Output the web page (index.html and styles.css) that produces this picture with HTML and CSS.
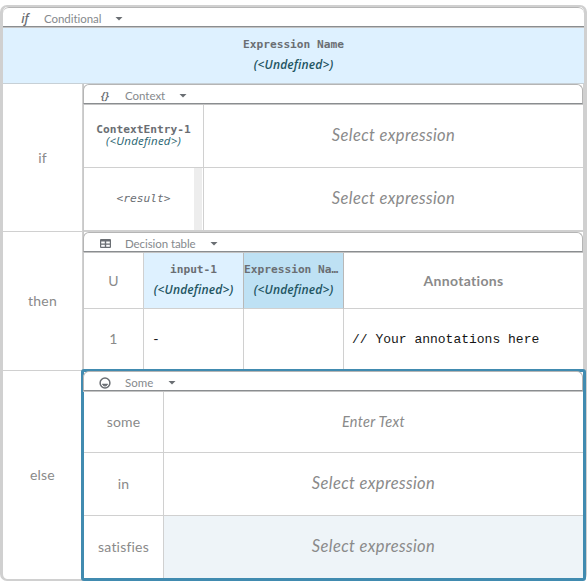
FILE: index.html
```html
<!DOCTYPE html>
<html lang="en">
<head>
<meta charset="utf-8">
<title>Boxed expression editor</title>
<link rel="stylesheet" href="styles.css">
</head>
<body>
<main class="editor">
  <header class="bar bar-root"><span class="icon"><i class="if-icon">if</i></span><span class="bar-name n-conditional">Conditional</span><span class="caret"></span></header>
  <div class="title"><b class="mono">Expression Name</b><i class="type">(&lt;Undefined&gt;)</i></div>
  <section class="branch branch-if">
    <div class="label l-if">if</div>
    <div class="nested">
      <header class="bar"><span class="icon"><i class="brace-icon">{}</i></span><span class="bar-name n-context">Context</span><span class="caret"></span></header>
      <div class="grid context">
        <div class="cell entry"><b class="mono">ContextEntry-1</b><i class="type type-light">(&lt;Undefined&gt;)</i></div>
        <div class="cell"><i class="select">Select expression</i></div>
        <div class="cell result"><i class="mono">&lt;result&gt;</i></div>
        <div class="cell"><i class="select">Select expression</i></div>
      </div>
    </div>
  </section>
  <section class="branch branch-then">
    <div class="label l-then">then</div>
    <div class="nested">
      <header class="bar"><span class="icon"><svg width="11" height="9" viewBox="0 0 11 9"><path fill="#6a6e73" fill-rule="evenodd" d="M1 0h9a1 1 0 0 1 1 1v7a1 1 0 0 1-1 1H1a1 1 0 0 1-1-1V1a1 1 0 0 1 1-1zM1.2 2.5h3.6v2H1.2zM6.2 2.5h3.6v2H6.2zM1.2 5.7h3.6v2H1.2zM6.2 5.7h3.6v2H6.2z"/></svg></span><span class="bar-name n-decision">Decision table</span><span class="caret"></span></header>
      <div class="grid decision">
        <div class="cell label-text">U</div>
        <div class="cell head input"><b class="mono">input-1</b><i class="type">(&lt;Undefined&gt;)</i></div>
        <div class="cell head output"><b class="mono">Expression Na…</b><i class="type">(&lt;Undefined&gt;)</i></div>
        <div class="cell"><b class="annotations">Annotations</b></div>
        <div class="cell label-text row-number">1</div>
        <div class="cell code">-</div>
        <div class="cell"></div>
        <div class="cell code">// Your annotations here</div>
      </div>
    </div>
  </section>
  <section class="branch branch-else">
    <div class="label l-else">else</div>
    <div class="nested selected">
      <header class="bar"><span class="icon"><svg width="12" height="12" viewBox="0 0 12 12" fill="none" stroke="#6a6e73"><circle cx="6" cy="6" r="4.9" stroke-width="1.5"/><path stroke-width="1.2" d="M3.2 7.4h5.6M4.2 8.3Q6 9.5 7.8 8.3"/></svg></span><span class="bar-name n-some">Some</span><span class="caret"></span></header>
      <div class="grid some">
        <div class="cell label-text">some</div>
        <div class="cell"><i class="enter">Enter Text</i></div>
        <div class="cell label-text">in</div>
        <div class="cell"><i class="select">Select expression</i></div>
        <div class="cell label-text">satisfies</div>
        <div class="cell hover"><i class="select">Select expression</i></div>
      </div>
    </div>
  </section>
</main>
</body>
</html>
```
FILE: styles.css
```css
* { box-sizing: border-box; }
body { margin: 0; padding-top: 5px; background: #fff; font-family: Lato, sans-serif; color: #8a8a8a; }
.editor { width: 587px; height: 576px; border: 3px solid #d0d0d0; border-top-width: 2px; border-bottom-width: 2px; border-radius: 7px; background: #fff; }
.bar { height: 21px; display: flex; align-items: center; padding: 3px 0 0 15px; background: #fff; border: 1px solid #b5b5b5; border-bottom: 1px solid #8a8d90; border-radius: 6px 6px 0 0; box-shadow: 0 1px #c4c4c4; position: relative; }
.bar-root { height: 20px; padding-left: 16px; border-left-width: 0; border-right-width: 0; }
.icon { width: 12px; display: flex; justify-content: center; flex: none; }
.if-icon { font: italic 600 12px/14px "Open Sans", sans-serif; color: #6a6e73; }
.brace-icon { font: italic 600 11px/14px "Noto Sans", sans-serif; color: #6a6e73; }
.bar-name { margin-left: 14px; padding-top: 1px; font: 11.5px/14px Lato, sans-serif; color: #85898d; white-space: nowrap; }
.bar-root .bar-name { margin-left: 13px; }
.n-conditional { width: 58px; letter-spacing: -.05px; }
.n-context { width: 41px; letter-spacing: -.02px; }
.n-decision { width: 72px; letter-spacing: -.08px; }
.n-some { width: 30px; letter-spacing: 0; }
.caret { margin-left: 13px; width: 8px; height: 4px; background: #6a6e73; clip-path: polygon(0 0, 100% 0, 50% 100%); }
.title { height: 57px; padding-bottom: 1px; background: #def1ff; border-bottom: 1px solid #c7d0d6; display: flex; flex-direction: column; align-items: center; justify-content: center; gap: 5px; }
.mono { font-family: "DejaVu Sans Mono", monospace; font-size: 11.2px; line-height: 15px; color: #6a6e73; }
.type { font: italic 600 12px/15px "Open Sans", sans-serif; color: #1f5562; letter-spacing: .14px; }
.branch { display: grid; grid-template-columns: 80px 1fr; }
.branch-if { height: 148px; }
.branch-then { height: 139px; }
.branch-else { height: 208px; }
.label { display: flex; align-items: center; justify-content: center; border-right: 1px solid #d0d0d0; border-bottom: 1px solid #d0d0d0; font-size: 14px; letter-spacing: .2px; padding-bottom: 1px; }
.branch-else .label { border-bottom: 0; }
.label.l-else { padding-bottom: 2px; }
.label.l-then { padding-bottom: 2px; }
.nested { min-width: 0; border-left: 1px solid #c8c8c8; border-right: 1px solid #d0d0d0; }
.nested .bar { margin-left: -1px; height: 20px; }
.grid { display: grid; padding-top: 1px; }
.cell { min-width: 0; display: flex; flex-direction: column; align-items: center; justify-content: center; border-right: 1px solid #d0d0d0; border-bottom: 1px solid #d0d0d0; }
.context { grid-template-columns: 120px 1fr; grid-template-rows: 63px 64px; }
.context .cell:nth-child(2n), .some .cell:nth-child(2n), .decision .cell:nth-child(4n) { border-right: 0; }
.context .cell:nth-child(n+3) { border-bottom-width: 2px; }
.entry { padding-bottom: 2px; }
.entry .mono { line-height: 12px; }
.entry .type { line-height: 10px; }
.entry .type-light { font-weight: 400; font-size: 11.5px; color: #28636f; letter-spacing: .25px; }
.result { padding-bottom: 2px; background: linear-gradient(#ededed, #ededed) 110px 0 / 8px 100% no-repeat; }
.select { padding-bottom: 2px; font-size: 16.5px; line-height: 20px; color: #8a8a8a; letter-spacing: .38px; }
.enter { padding-bottom: 2px; font-size: 14.5px; color: #8a8a8a; letter-spacing: .32px; }
.label-text { font-size: 14px; letter-spacing: .2px; padding-bottom: 1px; }
.row-number { padding-bottom: 2px; }
.some .label-text { padding-bottom: 2px; }
.decision { grid-template-columns: 60px 100px 100px 1fr; grid-template-rows: 56px 61px; }
.decision .cell:nth-child(n+5) { border-bottom: 0; }
.head { gap: 5px; border-right-color: #b8b8b8; padding-bottom: 3px; }
.input { background: #def1ff; }
.output { background: #bee1f4; }
.output .mono { align-self: flex-start; white-space: nowrap; }
.annotations { font-size: 14px; color: #8a8a8a; letter-spacing: .3px; }
.code { align-items: flex-start; padding-left: 8px; font: 13px "Liberation Mono", monospace; color: #151515; }
.selected { outline: 3px solid #418bb0; outline-offset: -1px; border-radius: 1px; }
.some { grid-template-columns: 80px 1fr; grid-template-rows: 61px 63px 62px; }
.some .cell:nth-child(n+5) { border-bottom: 0; }
.hover { background: #eef4f8; }
```
